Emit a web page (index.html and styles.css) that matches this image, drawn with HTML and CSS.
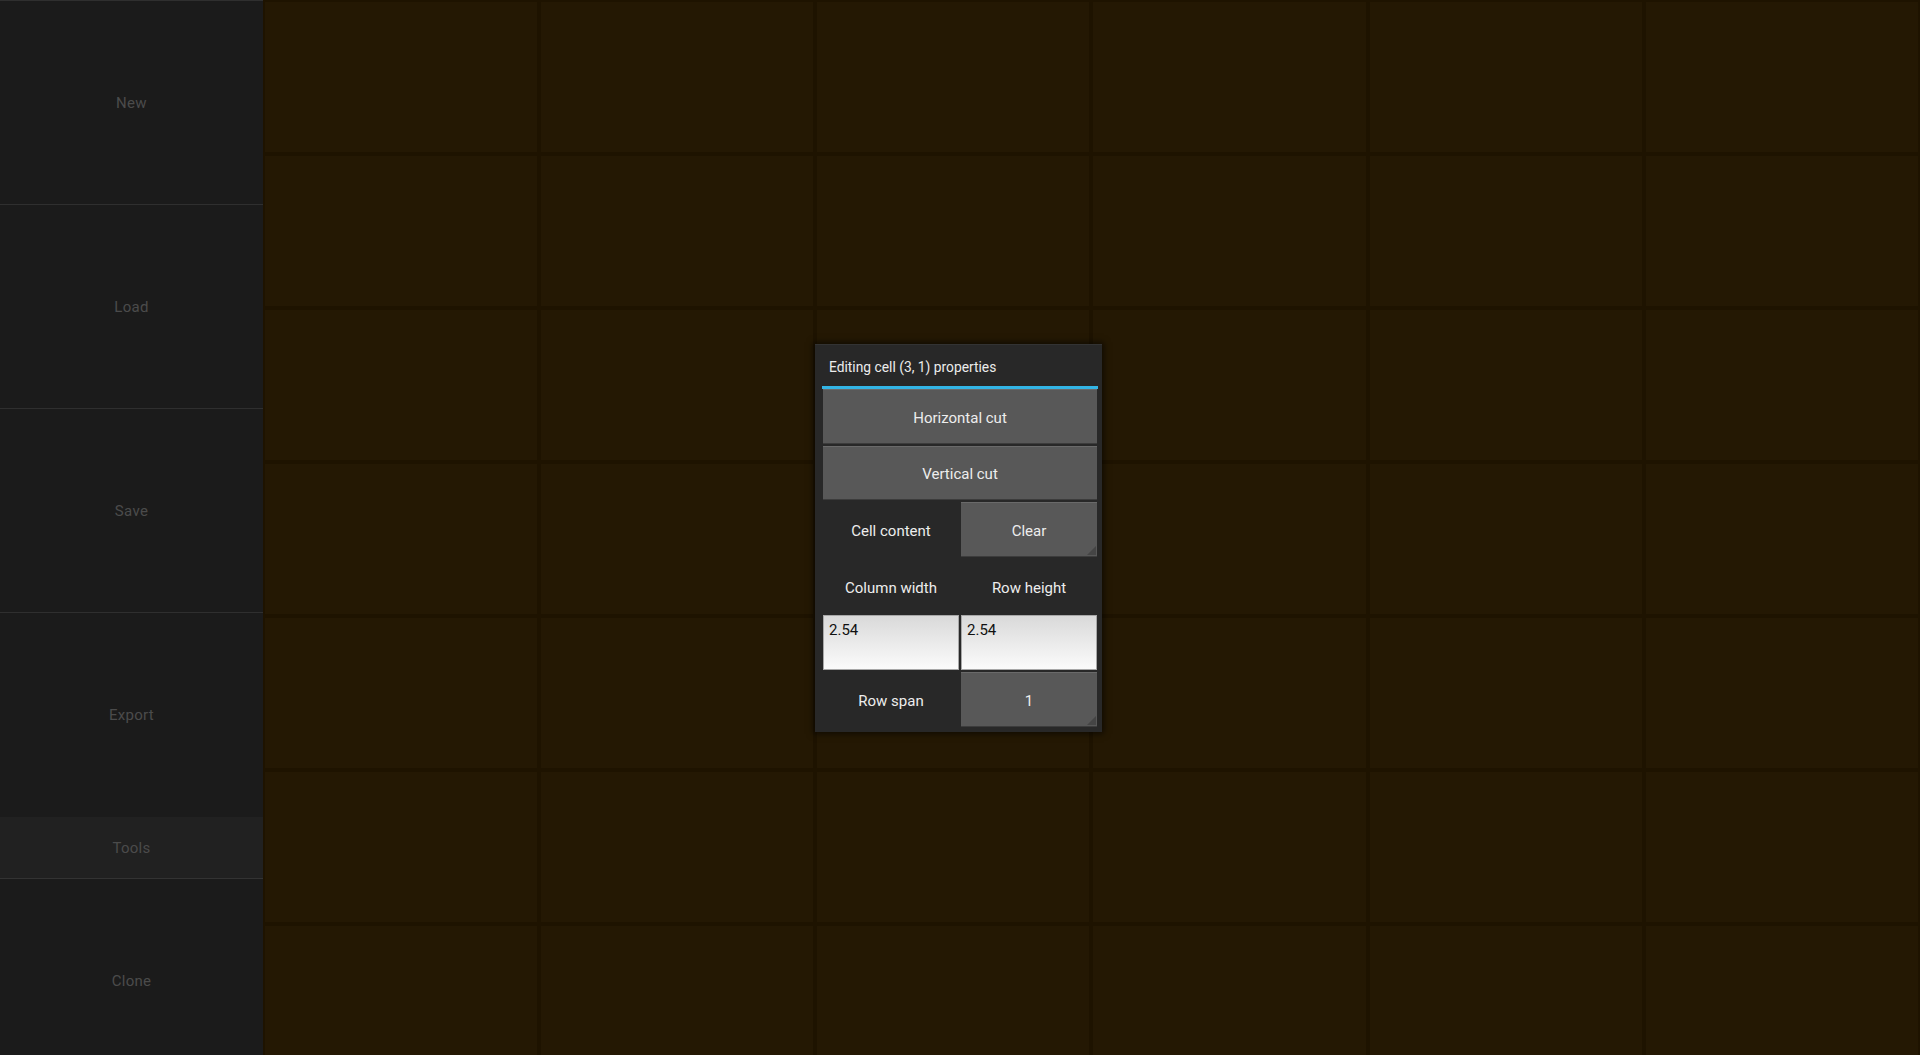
FILE: index.html
```html
<!DOCTYPE html>
<html>
<head>
<meta charset="utf-8">
<link rel="stylesheet" href="styles.css">
</head>
<body>
<div class="app">
  <nav class="sidebar">
    <div class="side-btn">New</div>
    <div class="side-btn">Load</div>
    <div class="side-btn">Save</div>
    <div class="side-btn">Export</div>
    <div class="side-btn side-tools">Tools</div>
    <div class="side-btn">Clone</div>
  </nav>
  <main class="grid">
    <div class="cell"></div><div class="cell"></div><div class="cell"></div><div class="cell"></div><div class="cell"></div><div class="cell"></div>
    <div class="cell"></div><div class="cell"></div><div class="cell"></div><div class="cell"></div><div class="cell"></div><div class="cell"></div>
    <div class="cell"></div><div class="cell"></div><div class="cell"></div><div class="cell"></div><div class="cell"></div><div class="cell"></div>
    <div class="cell"></div><div class="cell"></div><div class="cell"></div><div class="cell"></div><div class="cell"></div><div class="cell"></div>
    <div class="cell"></div><div class="cell"></div><div class="cell"></div><div class="cell"></div><div class="cell"></div><div class="cell"></div>
    <div class="cell"></div><div class="cell"></div><div class="cell"></div><div class="cell"></div><div class="cell"></div><div class="cell"></div>
    <div class="cell"></div><div class="cell"></div><div class="cell"></div><div class="cell"></div><div class="cell"></div><div class="cell"></div>
  </main>
  <section class="dialog">
    <div class="dialog-title">Editing cell (3, 1) properties</div>
    <div class="dialog-body">
      <div class="btn wide">Horizontal cut</div>
      <div class="btn wide">Vertical cut</div>
      <div class="label">Cell content</div>
      <div class="btn spinner">Clear</div>
      <div class="label">Column width</div>
      <div class="label">Row height</div>
      <div class="input">2.54</div>
      <div class="input">2.54</div>
      <div class="label">Row span</div>
      <div class="btn spinner">1</div>
    </div>
  </section>
</div>
</body>
</html>
```
FILE: styles.css
```css
html, body {
  margin: 0;
  padding: 0;
  height: 100%;
  overflow: hidden;
  background: #1c1100;
  font-family: Roboto, "Liberation Sans", sans-serif;
}

.app {
  display: flex;
  height: 1055px;
  position: relative;
  overflow: hidden;
}

.sidebar {
  width: 263px;
  flex-shrink: 0;
  display: flex;
  flex-direction: column;
  background: #1b1b1b;
  overflow: hidden;
}

.side-btn {
  flex-shrink: 0;
  height: 203px;
  border-top: 1px solid #2f2f2f;
  display: flex;
  align-items: center;
  justify-content: center;
  color: #4b4b4b;
  font-size: 15px;
  letter-spacing: 0.3px;
}

.side-tools {
  height: 61px;
  background: #212121;
  border-top: 1px solid #1b1b1b;
  border-bottom: 1px solid #333333;
}

.side-tools + .side-btn {
  border-top: none;
}

.grid {
  flex: 1;
  display: grid;
  grid-template-columns: repeat(6, 1fr);
  grid-auto-rows: 150px;
  gap: 4px;
  padding: 2px;
  background: #1e1300;
  align-content: start;
}

.cell {
  background: #241803;
}

.dialog {
  position: absolute;
  left: 815px;
  top: 344px;
  width: 287px;
  height: 388px;
  box-sizing: border-box;
  background: #282828;
  border-top: 1px solid #333;
  box-shadow: 0 0 6px 2px rgba(0, 0, 0, 0.55);
  padding: 0 4px 0 7px;
}

.dialog-title {
  height: 44px;
  padding: 3px 0 0 7px;
  box-sizing: border-box;
  border-bottom: 3px solid #33b5e5;
  display: flex;
  align-items: center;
  color: #ececec;
  font-size: 13.8px;
}

.dialog-body {
  display: grid;
  grid-template-columns: 136px 136px;
  grid-auto-rows: 54.6px;
  column-gap: 2px;
  row-gap: 2px;
  padding: 0 1px;
}

.btn {
  position: relative;
  background: #585858;
  border-top: 1px solid #6a6a6a;
  border-bottom: 1px solid #3c3c3c;
  box-sizing: border-box;
  display: flex;
  align-items: center;
  justify-content: center;
  color: #ededed;
  font-size: 15px;
  padding-top: 3px;
}

.wide {
  grid-column: 1 / 3;
}

.spinner::after {
  content: "";
  position: absolute;
  right: 1px;
  bottom: 1px;
  width: 0;
  height: 0;
  border-style: solid;
  border-width: 0 0 9px 9px;
  border-color: transparent transparent #454545 transparent;
}

.label {
  display: flex;
  align-items: center;
  justify-content: center;
  color: #ededed;
  font-size: 15px;
  padding-top: 3px;
}

.input {
  background: linear-gradient(#d9d9d9, #fbfbfb);
  border: 1px solid #a8a8a8;
  box-sizing: border-box;
  color: #111;
  font-size: 15px;
  padding: 5px 5px;
}
```
